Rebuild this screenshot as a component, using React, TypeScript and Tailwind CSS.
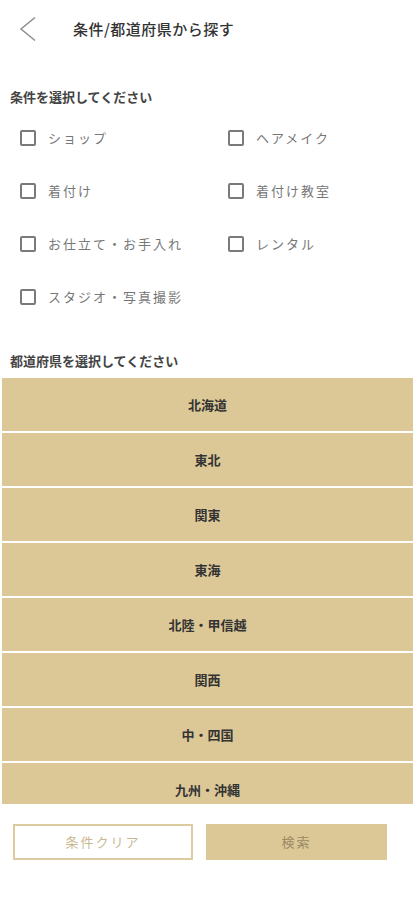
import React, { useState } from 'react';

const conditions = [
  'ショップ',
  'ヘアメイク',
  '着付け',
  '着付け教室',
  'お仕立て・お手入れ',
  'レンタル',
  'スタジオ・写真撮影',
];

const regions = ['北海道', '東北', '関東', '東海', '北陸・甲信越', '関西', '中・四国', '九州・沖縄'];

export default function App() {
  const [checked, setChecked] = useState<string[]>([]);

  const toggle = (name: string) =>
    setChecked((prev) => (prev.includes(name) ? prev.filter((n) => n !== name) : [...prev, name]));

  return (
    <div className="w-[415px] h-[900px] bg-white font-['Noto_Sans_CJK_JP','Noto_Sans',sans-serif] text-[#333]">
      {/* Header */}
      <div className="h-[58px] flex items-center">
        <button className="w-[56px] h-[58px] flex items-center pl-[19px]">
          <svg width="18" height="26" viewBox="0 0 18 26" fill="none">
            <path d="M16 1.5 L2 13 L16 24.5" stroke="#8a8a8a" strokeWidth="1.4" />
          </svg>
        </button>
        <h1 className="ml-[17px] text-[15px] font-medium tracking-[0.5px] text-[#333]">条件/都道府県から探す</h1>
      </div>

      {/* Conditions */}
      <div className="pt-[29px] px-[10px]">
        <h2 className="text-[13px] font-bold text-[#444] leading-[20px]">条件を選択してください</h2>
      </div>
      <div className="grid grid-cols-[208px_1fr] pl-[20px] pt-[22px] gap-y-[36px]">
        {conditions.map((c) => (
          <label key={c} className="flex items-center h-[17px] cursor-pointer">
            <span
              onClick={() => toggle(c)}
              className={`w-[16px] h-[16px] rounded-[2px] border-2 flex items-center justify-center ${
                checked.includes(c) ? 'border-[#c9b27f] bg-[#c9b27f]' : 'border-[#7a7a7a]'
              }`}
            />
            <span className="ml-[12px] text-[13px] tracking-[2px] text-[#777]">{c}</span>
          </label>
        ))}
      </div>

      {/* Prefectures */}
      <div className="pt-[46px] px-[10px]">
        <h2 className="text-[13px] font-bold text-[#444] leading-[20px]">都道府県を選択してください</h2>
      </div>
      <div className="mt-[7px] h-[426px] overflow-hidden px-[2px] flex flex-col gap-[2px]">
        {regions.map((r) => (
          <button
            key={r}
            className="shrink-0 h-[53px] w-full bg-[#dcc897] flex items-center justify-center text-[13px] font-bold text-[#333]"
          >
            {r}
          </button>
        ))}
      </div>

      {/* Buttons */}
      <div className="mt-[20px] flex gap-[13px] pl-[13px]">
        <button className="w-[180px] h-[36px] border-2 border-[#dccb9f] bg-white text-[13px] tracking-[2px] text-[#c9b88f]">
          条件クリア
        </button>
        <button className="w-[181px] h-[36px] bg-[#dcc897] text-[13px] tracking-[2px] text-[#9a8a66]">
          検索
        </button>
      </div>
    </div>
  );
}
